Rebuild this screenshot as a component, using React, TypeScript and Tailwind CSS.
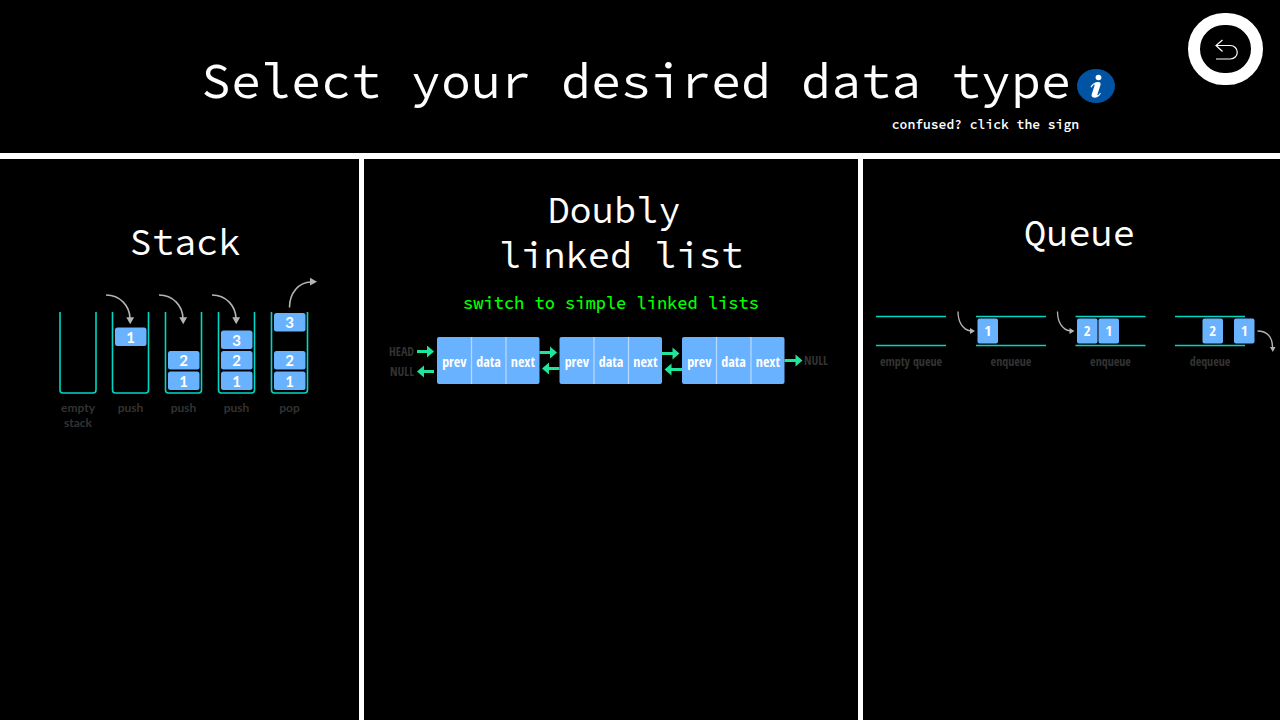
const TEAL = "#00d8c4";
const BLUE = "#69b2ff";
const GREEN = "#1fe59c";
const ARROW = "#b4b4b4";
const LABEL = "#333333";

const mono = "font-['Source_Code_Pro','Liberation_Mono',monospace]";
const narrow = "font-['Open_Sans_Condensed','Roboto_Condensed','Noto_Sans_Condensed','Lato',sans-serif]";
const headingClass = "text-[37px] leading-[45px] font-normal";

function StackDiagram() {
  const stacks = [
    { x: 60, label: ["empty", "stack"], items: [] },
    { x: 112.5, label: ["push"], items: [["1", 328]] },
    { x: 165.5, label: ["push"], items: [["2", 351.5], ["1", 372]] },
    { x: 218.5, label: ["push"], items: [["3", 331], ["2", 351.5], ["1", 372]] },
    { x: 271.5, label: ["pop"], items: [["3", 313.5], ["2", 351.5], ["1", 372]] },
  ] as { x: number; label: string[]; items: [string, number][] }[];
  return (
    <svg role="img" aria-label="Stack operations" viewBox="50 270 270 165" className="w-[270px] max-w-full font-['Lato',sans-serif] font-bold">
      {stacks.map((s) => (
        <g key={s.x}>
          <path d={`M${s.x} 312V390q0 3 3 3h30q3 0 3-3V312`} fill="none" stroke={TEAL} strokeWidth="1.6" />
          {s.items.map(([n, y]) => (
            <g key={n}>
              <rect x={s.x + 2.5} y={y - 0.5} width="31.5" height="18.5" rx="2.5" fill={BLUE} />
              <text x={s.x + 18} y={y + 14.5} textAnchor="middle" fill="#fff" fontSize="15">{n}</text>
            </g>
          ))}
          {s.label.map((t, i) => (
            <text key={t} x={s.x + 18} y={412 + i * 15} textAnchor="middle" fill={LABEL} fontSize="12">{t}</text>
          ))}
        </g>
      ))}
      {[106, 159, 212].map((x) => (
        <g key={x}>
          <path d={`M${x} 295C${x + 14} 295 ${x + 24} 306 ${x + 24} 319`} fill="none" stroke={ARROW} strokeWidth="1.6" />
          <path d={`M${x + 20.3} 317.3h7.8l-3.9 7z`} fill={ARROW} />
        </g>
      ))}
      <path d="M289.500 307.500C289.500 293 299 282 311 282" fill="none" stroke={ARROW} strokeWidth="1.6" />
      <path d="M310 277.800v7.800l7-3.900z" fill={ARROW} />
    </svg>
  );
}

function LinkArrow({ x, y, left, length }: { x: number; y: number; left?: boolean; length: number }) {
  const d = left
    ? `M${x} ${y}l7-6v4.500h${length - 7}v3h-${length - 7}v4.500z`
    : `M${x + length} ${y}l-7-6v4.500h-${length - 7}v3h${length - 7}v4.500z`;
  return <path d={d} fill={GREEN} />;
}

function LinkedListDiagram() {
  return (
    <svg role="img" aria-label="Doubly linked list" viewBox="384 330 450 60" className={`w-[450px] max-w-full ${narrow}`}>
      <g fill={LABEL} fontSize="12">
        <text x="414" y="356" textAnchor="end">HEAD</text>
        <text x="414" y="376" textAnchor="end">NULL</text>
        <text x="804" y="365">NULL</text>
      </g>
      {[437, 559.5, 682].map((x) => (
        <g key={x}>
          <rect x={x} y="337" width="102.500" height="47" rx="2" fill={BLUE} />
          <path d={`M${x + 34.5} 337v47M${x + 69} 337v47`} stroke="#b5d8ff" strokeWidth="1.300" />
          {["prev", "data", "next"].map((t, i) => (
            <text key={t} x={x + 17.3 + i * 34.3} y="367" textAnchor="middle" fill="#fff" fontSize="14" fontWeight="700">{t}</text>
          ))}
        </g>
      ))}
      <LinkArrow x={417} y={351.5} length={17} />
      <LinkArrow x={417} y={371.5} length={17} left />
      <LinkArrow x={539.5} y={352.5} length={17.5} />
      <LinkArrow x={542} y={368.5} length={17.5} left />
      <LinkArrow x={662} y={353.5} length={17.5} />
      <LinkArrow x={664.5} y={369.5} length={17.5} left />
      <LinkArrow x={784.5} y={360.5} length={18} />
    </svg>
  );
}

function QueueDiagram() {
  const queues = [
    { x: 876, label: "empty queue", items: [] },
    { x: 976, label: "enqueue", items: [["1", 977.5]] },
    { x: 1075.5, label: "enqueue", items: [["2", 1077], ["1", 1098.5]] },
    { x: 1175, label: "dequeue", items: [["2", 1202.5], ["1", 1234]] },
  ] as { x: number; label: string; items: [string, number][] }[];
  return (
    <svg role="img" aria-label="Queue operations" viewBox="872 305 408 70" className={`w-[408px] max-w-full font-bold ${narrow}`}>
      {queues.map((q) => (
        <g key={q.x}>
          <path d={`M${q.x} 316.500h70M${q.x} 345.500h70`} stroke={TEAL} strokeWidth="1.500" />
          {q.items.map(([n, x]) => (
            <g key={n}>
              <rect x={x} y="318.500" width="20.500" height="25" rx="2" fill={BLUE} />
              <text x={x + 10.3} y="336" textAnchor="middle" fill="#fff" fontSize="15">{n}</text>
            </g>
          ))}
          <text x={q.x + 35} y="366" textAnchor="middle" fill={LABEL} fontSize="12">{q.label}</text>
        </g>
      ))}
      {[958, 1057.5].map((x) => (
        <g key={x}>
          <path d={`M${x} 311.500C${x} 321 ${x + 4} 330 ${x + 13} 331`} fill="none" stroke={ARROW} strokeWidth="1.300" />
          <path d={`M${x + 12} 328l5 3-5 3z`} fill={ARROW} />
        </g>
      ))}
      <path d="M1257.500 331C1267 331 1272.500 337 1272.500 347" fill="none" stroke={ARROW} strokeWidth="1.300" />
      <path d="M1270 347h5.500l-2.700 5z" fill={ARROW} />
    </svg>
  );
}

export default function App() {
  return (
    <div className={`flex min-h-screen flex-col bg-black text-white ${mono}`}>
      <header className="relative flex h-[153px] flex-col items-center pt-[51px]">
        <div className="flex items-center gap-[6px] pl-9">
          <h1 className="text-[50px] leading-[60px] font-normal whitespace-nowrap">Select your desired data type</h1>
          <button type="button" aria-label="Information" className="mt-[10px] shrink-0 cursor-pointer">
            <svg viewBox="0 0 38 34" className="h-[34px] w-[38px]">
              <ellipse cx="19" cy="17" rx="19" ry="17" fill="#0054a3" />
              <ellipse cx="21.500" cy="8.500" rx="2.900" ry="2.700" fill="#fff" />
              <path d="M13.500 18C15 14.500 18.500 13 21 13c2.300 0 3 1.200 2.500 3L20.500 25.300c-.3 1.100.4 1.200 1.100.5l1.500-2 .8.6c-1.800 3-4 4.300-6.400 4.300-2.600 0-3.400-1.500-2.700-3.600l2.800-8.500c.3-1.100-.5-1.300-1.200-.5l-1.900 2.400z" fill="#fff" />
            </svg>
          </button>
        </div>
        <p className="mt-[6px] self-end pr-[201px] text-[13px] leading-4 font-semibold">confused? click the sign</p>
        <button type="button" aria-label="Back" className="absolute top-[13px] right-[17px] flex h-[72px] w-[75px] cursor-pointer items-center justify-center rounded-full border-12 border-white bg-black">
          <svg viewBox="0 0 24 22" className="h-[22px] w-6" fill="none" stroke="#fff" strokeWidth="1.200">
            <path d="M8.500 2L2 7.500l6.500 6M2 7.500H16.500a6.500 6.500 0 0 1 0 13.500H2" />
          </svg>
        </button>
      </header>
      <main className="grid flex-1 grid-cols-[359fr_494fr_417fr] gap-x-[5px] border-t-6 border-white bg-white">
        <section className="flex flex-col items-center bg-black pt-[61px] pl-[11px]">
          <h2 className={headingClass}>Stack</h2>
          <div className="mt-[5px]"><StackDiagram /></div>
        </section>
        <section className="flex flex-col items-center bg-black pt-[29px]">
          <h2 className={`text-center ${headingClass}`}>
            <span className="block pl-1.5">Doubly</span>
            <span className="block pl-5">linked list</span>
          </h2>
          <a href="#simple" className="mt-[15px] text-[17px] leading-5 font-medium text-[#00ff00]">switch to simple linked lists</a>
          <div className="mt-[17px] pr-1"><LinkedListDiagram /></div>
        </section>
        <section className="flex flex-col items-center bg-black pt-[52px] pl-2">
          <h2 className={`pl-2 ${headingClass}`}>Queue</h2>
          <div className="mt-[49px]"><QueueDiagram /></div>
        </section>
      </main>
    </div>
  );
}
